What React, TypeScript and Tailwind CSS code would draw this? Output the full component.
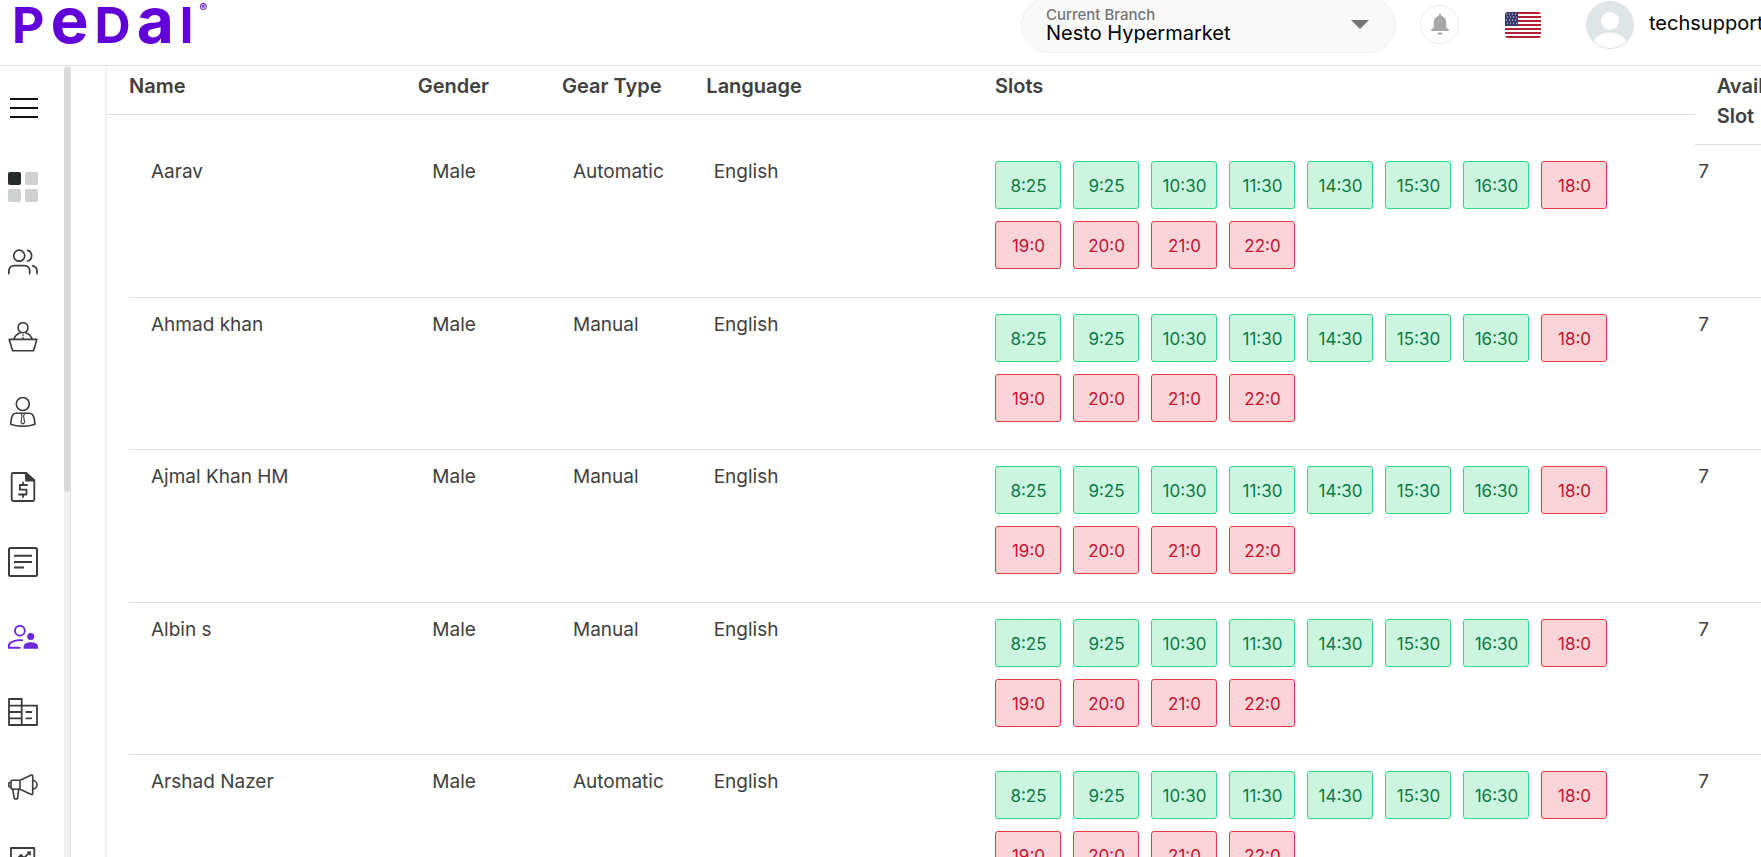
import type { ReactNode } from 'react'

interface Slot {
  time: string
  available: boolean
}

interface Trainer {
  name: string
  gender: string
  gearType: string
  language: string
  availableSlots: number
}

interface MenuItem {
  label: string
  active?: boolean
  icon: ReactNode
}

const slots: Slot[] = [
  { time: '8:25', available: true },
  { time: '9:25', available: true },
  { time: '10:30', available: true },
  { time: '11:30', available: true },
  { time: '14:30', available: true },
  { time: '15:30', available: true },
  { time: '16:30', available: true },
  { time: '18:0', available: false },
  { time: '19:0', available: false },
  { time: '20:0', available: false },
  { time: '21:0', available: false },
  { time: '22:0', available: false },
]

const trainers: Trainer[] = [
  { name: 'Aarav', gender: 'Male', gearType: 'Automatic', language: 'English', availableSlots: 7 },
  { name: 'Ahmad khan', gender: 'Male', gearType: 'Manual', language: 'English', availableSlots: 7 },
  { name: 'Ajmal Khan HM', gender: 'Male', gearType: 'Manual', language: 'English', availableSlots: 7 },
  { name: 'Albin s', gender: 'Male', gearType: 'Manual', language: 'English', availableSlots: 7 },
  { name: 'Arshad Nazer', gender: 'Male', gearType: 'Automatic', language: 'English', availableSlots: 7 },
]

const menuItems: MenuItem[] = [
  {
    label: 'Dashboard',
    icon: (
      <g stroke="none">
        <rect x="0" y="0" width="13" height="13" rx="2" fill="#272b2a" />
        <rect x="17" y="0" width="13" height="13" rx="2" fill="#cfd1d0" />
        <rect x="0" y="17" width="13" height="13" rx="2" fill="#cfd1d0" />
        <rect x="17" y="17" width="13" height="13" rx="2" fill="#cfd1d0" />
      </g>
    ),
  },
  {
    label: 'Customers',
    icon: (
      <g strokeWidth="1.7">
        <circle cx="11.2" cy="8.7" r="5.5" />
        <path d="M19.6 3.4a5.5 5.5 0 0 1 0 10.6" />
        <path d="M.9 26.6v-3a5 5 0 0 1 5-5h10.8a5 5 0 0 1 5 5v3" />
        <path d="M24.6 18.8a5.4 5.4 0 0 1 4.4 5.2v2.6" />
      </g>
    ),
  },
  {
    label: 'Reception',
    icon: (
      <g strokeWidth="1.6">
        <circle cx="15" cy="5.7" r="5" />
        <path d="M6 17.2c1-3.4 3.4-5.6 6.4-6.5M24 17.2c-1-3.4-3.4-5.6-6.4-6.5" />
        <path d="M1.2 17.4h27.6l-3.2 11.4H4.6z" />
        <path d="M15 12.500v1M15 15v2" strokeWidth="1.2" />
      </g>
    ),
  },
  {
    label: 'Trainers',
    icon: (
      <g strokeWidth="1.6">
        <circle cx="14.8" cy="7" r="6.5" />
        <path d="M2.7 27.3c.2-4.3.8-7.3 2.1-9.3.8-1.2 2-1.7 3.6-1.7h12.8c1.6 0 2.8.5 3.6 1.7 1.3 2 1.9 5 2.1 9.3-6 2.6-18.2 2.6-24.2 0z" />
        <path d="m13 16.5 1 2.5-1 6.5 1.8 1.5 1.8-1.5-1-6.5 1-2.5" strokeWidth="1.1" />
      </g>
    ),
  },
  {
    label: 'Invoices',
    icon: (
      <g strokeWidth="1.8">
        <path d="M18 1H5.2a1.5 1.5 0 0 0-1.5 1.5v25A1.5 1.5 0 0 0 5.2 29h19.6a1.5 1.5 0 0 0 1.5-1.5V8.5z" />
        <path d="M18 1v7.500h8.300z" fill="#3b3b3b" />
        <path d="M19 13h-7.2v4.7h6.700v4.8H11M15 10.500V13M15 22.500V25" />
      </g>
    ),
  },
  {
    label: 'Reports',
    icon: (
      <g strokeWidth="2">
        <rect x="1" y="1" width="28" height="28" rx="1.5" />
        <path d="M6 8.8h18M6 15h18M6 20.400h10" strokeLinecap="butt" />
      </g>
    ),
  },
  {
    label: 'Trainer slots',
    active: true,
    icon: (
      <g strokeWidth="1.9">
        <circle cx="11.9" cy="8.7" r="4.9" />
        <circle cx="22.7" cy="14.4" r="3.5" fill="currentColor" stroke="none" />
        <path d="M15 18.400c-5.500-.9-14.100 1-14.100 5.400v2h11.600" strokeLinecap="butt" />
        <path d="M15.6 26.7v-1.9c0-3.1 3.7-4.5 7.200-4.5s7.200 1.400 7.200 4.500v1.900z" fill="currentColor" stroke="none" />
      </g>
    ),
  },
  {
    label: 'Branches',
    icon: (
      <g strokeWidth="1.8">
        <path d="M1 2h12.7v26H1zM13.7 8.600H29V28H13.700M1 8.600h12.700M1 15h12.700M1 21.300h12.700" />
        <path d="M18.300 15h5M18.300 21.300h5" />
      </g>
    ),
  },
  {
    label: 'Promotions',
    icon: (
      <g strokeWidth="1.6">
        <path d="M12 8.300H4.500a1.500 1.500 0 0 0-1.500 1.500v5.900a1.500 1.500 0 0 0 1.500 1.500H12zM12 8.300l11.500-5.200a.8.800 0 0 1 1.200.7v17.900a.8.800 0 0 1-1.200.7L12 17.200" />
        <path d="M3 10.500H1.800a1 1 0 0 0-1 1v2.500a1 1 0 0 0 1 1H3M24.700 8.500a4.300 4.300 0 0 1 0 8.600" />
        <path d="m4.700 17.200 1.400 8a1.800 1.800 0 0 0 3.600 0l1-8" />
      </g>
    ),
  },
  {
    label: 'Analytics',
    icon: (
      <g strokeWidth="1.8">
        <path d="M3 1h23.300v23H3z" />
        <path d="m9 12 4-4 3 3 6-6M20 5.500h2v2" />
      </g>
    ),
  },
]

// Pairs of star rows on the flag canton
const flagStars = [2, 5, 8, 11].flatMap((y, row) =>
  [1.5, 4.5, 7.5, 10.5].map((x) => ({ x: x + (row % 2), y }))
)

export default function App() {
  return (
    <div className="flex h-screen flex-col overflow-hidden bg-white font-['Inter',sans-serif] text-[#404040]">
      <Header />
      <div className="flex min-h-0 flex-1">
        <Sidebar />
        <main className="min-w-0 flex-1 overflow-hidden pl-9">
          <div className="min-h-full min-w-[1732px] bg-white shadow-[0_0_4px_rgba(0,0,0,0.18)]">
            <TrainerTable />
          </div>
        </main>
      </div>
    </div>
  )
}

function Header() {
  return (
    <header className="flex h-[66px] shrink-0 items-center border-b border-[#e0e0e0] pb-4 pl-3">
      <Logo />
      <div className="ml-auto flex h-14 w-[375px] items-center rounded-full border border-[#efefef] bg-[#f9f9f9] px-6">
        <div className="flex flex-1 flex-col">
          <label htmlFor="branch" className="text-[15px] font-medium leading-4 text-[#757575]">
            Current Branch
          </label>
          <select id="branch" className="h-5 w-full appearance-none bg-transparent text-[20px] leading-5 text-black outline-none">
            <option>Nesto Hypermarket</option>
          </select>
        </div>
        <svg className="mr-0.5" width="18" height="9" viewBox="0 0 18 9" fill="#757575" aria-hidden="true">
          <path d="M0 0h18L9 9z" />
        </svg>
      </div>
      <button
        type="button"
        aria-label="Notifications"
        className="ml-6 flex size-[39px] shrink-0 items-center justify-center rounded-full border border-[#ededed]"
      >
        <svg width="18" height="21" viewBox="0 0 18 21" fill="#a8a8a8">
          <path d="M9 0c.9 0 1.5.6 1.5 1.5v.4c2.9.7 4.7 3.1 4.7 6.1v5.2l2.8 2.7V17H0v-1.100l2.800-2.700V8c0-3 1.800-5.400 4.700-6.100v-.4C7.500.6 8.100 0 9 0z" />
          <path d="M6.500 18.500h5C11.500 20 10.400 21 9 21s-2.500-1-2.500-2.500z" />
        </svg>
      </button>
      <button type="button" aria-label="Change language" className="ml-[46px] shrink-0 overflow-hidden rounded-[3px]">
        <UsFlag />
      </button>
      <svg className="ml-[45px] shrink-0" width="48" height="48" viewBox="0 0 48 48" aria-hidden="true">
        <circle cx="24" cy="24" r="24" fill="#dfe4e6" />
        <circle cx="24" cy="20" r="9" fill="#fff" />
        <path d="M7.500 40C11 34.500 17 31.500 24 31.500S37 34.500 40.500 40A23 23 0 0 1 7.500 40z" fill="#fff" />
      </svg>
      <span className="mb-1 ml-[15px] w-28 shrink-0 overflow-hidden whitespace-nowrap text-[20px] leading-7 text-black">
        techsupport
      </span>
    </header>
  )
}

function Logo() {
  return (
    <a href="#" aria-label="Pedal" className="mb-2.5 flex h-9 shrink-0 items-baseline gap-1.5 font-bold text-[#6200d9]">
      <span className="text-[50px] leading-9">P</span>
      <span className="text-[64px] leading-9">e</span>
      <span className="text-[50px] leading-9">D</span>
      <span className="text-[64px] leading-9">a</span>
      <span className="text-[50px] leading-9">l</span>
      <span className="self-start text-[12px] leading-3">®</span>
    </a>
  )
}

function UsFlag() {
  return (
    <svg className="block" width="36" height="26" viewBox="0 0 36 26">
      <rect width="36" height="26" fill="#fff" />
      {[0, 4, 8, 12, 16, 20, 24].map((y) => (
        <rect key={y} y={y} width="36" height="2" fill="#b22234" />
      ))}
      <rect width="13" height="14" fill="#3c3b6e" />
      {flagStars.map((star) => (
        <circle key={`${star.x}-${star.y}`} cx={star.x} cy={star.y} r="0.6" fill="#fff" />
      ))}
    </svg>
  )
}

function Sidebar() {
  return (
    <aside className="flex w-[71px] shrink-0 border-r border-[#e0e0e0]">
      <nav className="flex flex-1 flex-col gap-[45px] overflow-hidden pl-2 pt-[27px]">
        <button type="button" aria-label="Toggle menu" className="mb-1 size-[30px] shrink-0">
          <svg width="30" height="30" viewBox="0 0 30 30" stroke="#111" strokeWidth="2">
            <path d="M2 6h28M2 15h28M2 24h28" />
          </svg>
        </button>
        {menuItems.map((item) => (
          <a
            key={item.label}
            href="#"
            aria-label={item.label}
            className={item.active ? 'size-[30px] shrink-0 text-[#6d28d9]' : 'size-[30px] shrink-0 text-[#3b3b3b]'}
          >
            <svg
              width="30"
              height="30"
              viewBox="0 0 30 30"
              fill="none"
              stroke="currentColor"
              strokeLinecap="round"
              strokeLinejoin="round"
            >
              {item.icon}
            </svg>
          </a>
        ))}
      </nav>
      {/* Scroll track */}
      <div className="w-1.5 bg-[#f1f1f1] pt-px">
        <div className="h-[425px] rounded-full bg-[#d9d9d9]" />
      </div>
    </aside>
  )
}

function TrainerTable() {
  return (
    <table className="block w-full text-left">
      <thead className="block">
        <tr className="grid grid-cols-12 items-start text-[20px] leading-[30px]">
          <HeaderCell className="col-span-2">Name</HeaderCell>
          <HeaderCell>Gender</HeaderCell>
          <HeaderCell>Gear Type</HeaderCell>
          <HeaderCell className="col-span-2">Language</HeaderCell>
          <HeaderCell className="col-span-5">Slots</HeaderCell>
          <HeaderCell>Available Slot</HeaderCell>
        </tr>
      </thead>
      <tbody className="block px-[22px]">
        {trainers.map((trainer) => (
          <tr
            key={trainer.name}
            className="grid h-[153px] grid-cols-12 border-b border-[#dedede] pt-4 text-[19px] leading-[22px] even:h-[152px]"
          >
            <td className="col-span-2 pl-[22px]">{trainer.name}</td>
            <td className="pl-[22px]">{trainer.gender}</td>
            <td className="pl-[22px]">{trainer.gearType}</td>
            <td className="col-span-2 pl-[22px]">{trainer.language}</td>
            <td className="col-span-5 px-[22px]">
              <div className="flex flex-wrap gap-3">
                {slots.map((slot) => (
                  <SlotButton key={slot.time} slot={slot} />
                ))}
              </div>
            </td>
            <td className="pl-[22px]">{trainer.availableSlots}</td>
          </tr>
        ))}
      </tbody>
    </table>
  )
}

interface HeaderCellProps {
  className?: string
  children: ReactNode
}

function HeaderCell({ className = '', children }: HeaderCellProps) {
  return (
    <th className={`border-b border-[#dedede] pb-[13px] pl-[22px] pt-[5px] font-semibold ${className}`}>{children}</th>
  )
}

function SlotButton({ slot }: { slot: Slot }) {
  return (
    <button
      type="button"
      className={
        slot.available
          ? 'h-12 w-[66px] rounded-[3px] border border-[#2bd985] bg-[#ccf5e0] pl-px pt-0.5 text-[17px] text-[#087a44]'
          : 'h-12 w-[66px] rounded-[3px] border border-[#e63946] bg-[#f9d4d8] pl-px pt-0.5 text-[17px] text-[#c8102e]'
      }
    >
      {slot.time}
    </button>
  )
}
